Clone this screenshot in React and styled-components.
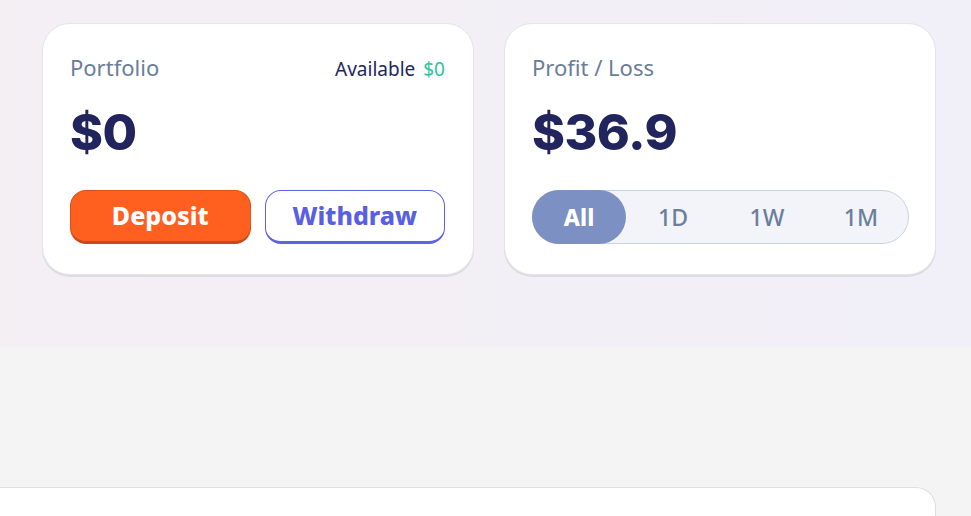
import React from 'react';
import styled, { createGlobalStyle } from 'styled-components';

const GlobalStyle = createGlobalStyle`
  html, body {
    margin: 0;
    padding: 0;
    background: #f4f4f4;
    font-family: 'Noto Sans', 'Inter', sans-serif;
  }
  * { box-sizing: border-box; }
`;

const Hero = styled.section`
  height: 347px;
  padding: 23px 35px 0 42px;
  background: linear-gradient(90deg, #f4eff3 0%, #f1eff8 100%);
  display: grid;
  grid-template-columns: 432px 432px;
  column-gap: 30px;
  align-items: start;
`;

const Card = styled.div`
  height: 252px;
  background: #fff;
  border: 1px solid #e4e4ea;
  border-radius: 28px;
  box-shadow: 0 2px 0 #dcdce2;
  padding: 28px 28px 0 27px;
  display: flex;
  flex-direction: column;
`;

const HeaderRow = styled.div`
  display: flex;
  justify-content: space-between;
  align-items: baseline;
  height: 30px;
`;

const Label = styled.span`
  font-size: 22px;
  color: #6a7d99;
`;

const Available = styled.span`
  font-size: 19px;
  color: #23265c;
  display: flex;
  gap: 8px;
`;

const Green = styled.span`
  color: #2ec39d;
`;

const Amount = styled.div`
  margin-top: 20px;
  font-family: 'Inter', sans-serif;
  font-weight: 800;
  font-size: 50px;
  line-height: 60px;
  color: #22245e;
  letter-spacing: -0.5px;
`;

const Actions = styled.div`
  margin-top: 28px;
  display: flex;
  gap: 14px;
`;

const Button = styled.button`
  width: 181px;
  height: 54px;
  border-radius: 16px;
  font-family: 'Noto Sans', sans-serif;
  font-weight: 800;
  font-size: 25px;
  cursor: pointer;
  background: ${({ $primary }) => ($primary ? '#ff5f1f' : '#fff')};
  color: ${({ $primary }) => ($primary ? '#fff' : '#5a5fe2')};
  border: 1px solid ${({ $primary }) => ($primary ? '#d8521a' : '#5b63e6')};
  border-bottom: 3px solid ${({ $primary }) => ($primary ? '#c9481a' : '#5b63e6')};
  padding: 0 0 2px;
`;

const Segmented = styled.div`
  margin-top: 28px;
  width: 377px;
  height: 54px;
  display: flex;
  background: #f2f4f9;
  border: 1px solid #c9d1e2;
  border-radius: 27px;
`;

const Segment = styled.button`
  flex: ${({ $active }) => ($active ? '0 0 94px' : '1')};
  height: 54px;
  margin: -1px 0 0 ${({ $active }) => ($active ? '-1px' : '0')};
  border: none;
  border-radius: 27px;
  background: ${({ $active }) => ($active ? '#7d90c4' : 'transparent')};
  color: ${({ $active }) => ($active ? '#fff' : '#6b7e9c')};
  font-family: 'Noto Sans', sans-serif;
  font-weight: ${({ $active }) => ($active ? 800 : 500)};
  font-size: 23px;
  cursor: pointer;
`;

const Lower = styled.section`
  padding: 140px 35px 0 0;
`;

const BottomCard = styled.div`
  margin-left: -20px;
  height: 29px;
  background: #fff;
  border: 1px solid #dedee2;
  border-bottom: none;
  border-radius: 20px 20px 0 0;
`;

export default function App() {
  const ranges = ['All', '1D', '1W', '1M'];
  return (
    <>
      <GlobalStyle />
      <Hero>
        <Card>
          <HeaderRow>
            <Label>Portfolio</Label>
            <Available>
              Available <Green>$0</Green>
            </Available>
          </HeaderRow>
          <Amount>$0</Amount>
          <Actions>
            <Button $primary>Deposit</Button>
            <Button>Withdraw</Button>
          </Actions>
        </Card>
        <Card>
          <HeaderRow>
            <Label>Profit / Loss</Label>
          </HeaderRow>
          <Amount>$36.9</Amount>
          <Segmented>
            {ranges.map((r, i) => (
              <Segment key={r} $active={i === 0}>{r}</Segment>
            ))}
          </Segmented>
        </Card>
      </Hero>
      <Lower>
        <BottomCard />
      </Lower>
    </>
  );
}
